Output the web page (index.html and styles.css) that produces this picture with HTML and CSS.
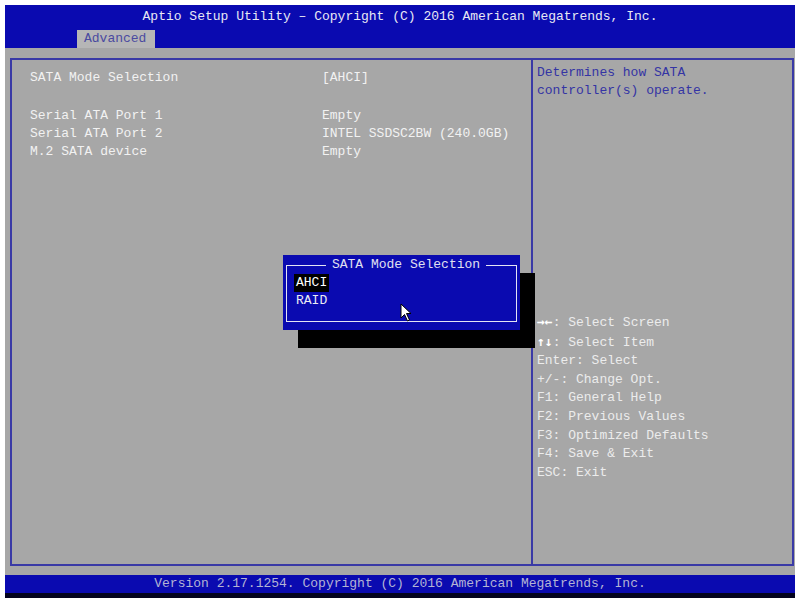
FILE: index.html
```html
<!DOCTYPE html>
<html lang="en">
<head>
  <meta charset="UTF-8">
  <title>Aptio Setup Utility</title>
  <link rel="stylesheet" href="styles.css">
</head>
<body>
  <div class="screen">
    <!-- top bar -->
    <div class="header">
      <div class="title">Aptio Setup Utility – Copyright (C) 2016 American Megatrends, Inc.</div>
      <div class="tab">Advanced</div>
    </div>

    <!-- main area -->
    <div class="body">
      <div class="frame">
        <div class="pane-left">
          <div class="row first">
            <span class="label">SATA Mode Selection</span>
            <span class="value">[AHCI]</span>
          </div>
          <div class="row">
            <span class="label">Serial ATA Port 1</span>
            <span class="value">Empty</span>
          </div>
          <div class="row">
            <span class="label">Serial ATA Port 2</span>
            <span class="value">INTEL SSDSC2BW (240.0GB)</span>
          </div>
          <div class="row">
            <span class="label">M.2 SATA device</span>
            <span class="value">Empty</span>
          </div>
        </div>
        <div class="pane-right">
          <div class="help">
            <div>Determines how SATA</div>
            <div>controller(s) operate.</div>
          </div>
          <div class="keys">
            <div><span class="arrows">→←</span>: Select Screen</div>
            <div><span class="arrows">↑↓</span>: Select Item</div>
            <div>Enter: Select</div>
            <div>+/-: Change Opt.</div>
            <div>F1: General Help</div>
            <div>F2: Previous Values</div>
            <div>F3: Optimized Defaults</div>
            <div>F4: Save &amp; Exit</div>
            <div>ESC: Exit</div>
          </div>
        </div>
      </div>
    </div>

    <div class="footer">Version 2.17.1254. Copyright (C) 2016 American Megatrends, Inc.</div>
    <div class="bottom-edge"></div>

    <!-- popup dialog -->
    <div class="popup">
      <div class="popup-box">
        <div class="popup-title">SATA Mode Selection</div>
        <div class="option selected">AHCI</div>
        <div class="option">RAID</div>
      </div>
      <svg class="cursor" width="14" height="20" viewBox="0 0 14 20">
        <path d="M1 1 L1 15 L4.5 11.5 L7.5 18 L9.5 17 L6.5 10.5 L11 10.5 Z" fill="#fff" stroke="#000" stroke-width="1"/>
      </svg>
    </div>
  </div>
</body>
</html>
```

FILE: styles.css
```css
* {
  box-sizing: border-box;
}

body {
  margin: 0;
  background: #fff;
  font-family: "Liberation Mono", "DejaVu Sans Mono", monospace;
  font-size: 13px;
  line-height: 18px;
}

.screen {
  position: relative;
  margin: 5px 0 0 5px;
  width: 790px;
}

.header {
  height: 43px;
  background: #0a0ab0;
  display: flex;
  flex-direction: column;
}

.title {
  margin-top: 3px;
  text-align: center;
  color: #e8e8f4;
}

.tab {
  margin-top: 4px;
  margin-left: 72px;
  width: 78px;
  height: 18px;
  padding-left: 7px;
  background: #b6b6b6;
  color: #4a4aa0;
}

.body {
  background: #a7a7a7;
  padding: 10px 1px 9px 5px;
}

.frame {
  display: flex;
  height: 508px;
  border: 2px solid #3a3aa6;
}

.pane-left {
  width: 521px;
  border-right: 2px solid #3a3aa6;
  padding: 9px 0 0 18px;
}

.row {
  display: grid;
  grid-template-columns: 292px 1fr;
  color: #f2f2f2;
}

.row.first {
  margin-bottom: 20px;
}

.pane-right {
  flex: 1;
  padding: 4px 0 0 4px;
}

.help {
  color: #3434a4;
}

.keys {
  margin-top: 213px;
  color: #ececec;
  line-height: 18.6px;
}

.arrows {
  font-family: "DejaVu Sans Mono", monospace;
  font-weight: bold;
  color: #fff;
}

.footer {
  height: 18px;
  background: #0a0ab0;
  color: #b4b4d4;
  text-align: center;
}

.bottom-edge {
  height: 5px;
  background: #03031e;
}

/* popup over the content */
.popup {
  position: absolute;
  left: 278px;
  top: 250px;
  width: 237px;
  height: 75px;
  background: #0a0ab0;
  box-shadow: 15px 18px 0 0 #000;
  padding: 10px 3px 8px 3px;
}

.popup-box {
  height: 100%;
  border: 1.5px solid #e4e4f4;
  padding: 3px 0 0 9px;
}

.popup-title {
  margin: -13px auto 0;
  width: fit-content;
  padding: 0 6px;
  background: #0a0ab0;
  color: #e0e0f0;
}

.option {
  color: #ececf4;
  width: fit-content;
}

.option.selected {
  background: #000;
  color: #fff;
  padding: 0 2px;
  margin-left: -2px;
}

.cursor {
  position: absolute;
  left: 117px;
  top: 48px;
}
```
